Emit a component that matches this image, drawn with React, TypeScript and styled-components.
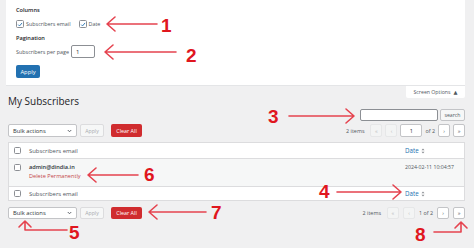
import React from "react";
import styled, { createGlobalStyle } from "styled-components";

const Global = createGlobalStyle`
  html, body { margin: 0; padding: 0; }
  body {
    background: #f0f0f1;
    font-family: "Open Sans", "Noto Sans", "DejaVu Sans", sans-serif;
    color: #2c3338;
  }
  * { box-sizing: border-box; }
`;

const Page = styled.div`
  position: relative;
  width: 474px;
  height: 248px;
  overflow: hidden;
  background: #f0f0f1;
`;

const OptionsPanel = styled.div`
  margin-left: 6px;
  width: 459px;
  height: 86px;
  background: #fff;
  border-bottom: 1px solid #e4e5e7;
  padding: 6px 10px 0 10px;
  display: flex;
  flex-direction: column;
`;

const Legend = styled.div<{ $gap?: number }>`
  margin-top: ${(p) => p.$gap ?? 0}px;
  font-size: 5.6px;
  font-weight: 600;
  color: #1d2327;
  line-height: 8px;
  height: 8px;
`;

const CheckRow = styled.div`
  display: flex;
  align-items: center;
  gap: 8px;
  margin-top: 6px;
  height: 8px;
`;

const CheckLabel = styled.label`
  display: flex;
  align-items: center;
  gap: 2px;
  font-size: 5.4px;
  color: #50575e;
`;

const Box = styled.span<{ $size: number }>`
  width: ${(p) => p.$size}px;
  height: ${(p) => p.$size}px;
  border: 0.7px solid #8c8f94;
  border-radius: 1.5px;
  background: #fff;
  display: inline-flex;
  align-items: center;
  justify-content: center;
  flex: none;
`;

const PerPageRow = styled.div`
  display: flex;
  align-items: center;
  gap: 2px;
  margin-top: 3px;
  font-size: 5.4px;
  color: #50575e;
`;

const NumInput = styled.div`
  width: 24px;
  height: 13px;
  border: 0.7px solid #8c8f94;
  border-radius: 2px;
  background: #fff;
  font-size: 6px;
  color: #2c3338;
  display: flex;
  align-items: center;
  padding-left: 4px;
`;

const PrimaryButton = styled.div`
  margin-top: 7px;
  width: 24px;
  height: 13px;
  background: #2271b1;
  border-radius: 2px;
  color: #fff;
  font-size: 5.8px;
  display: flex;
  align-items: center;
  justify-content: center;
`;

const Wrap = styled.div`
  padding: 0 9px 0 8px;
  display: flex;
  flex-direction: column;
`;

const TitleRow = styled.div`
  display: flex;
  justify-content: space-between;
  align-items: flex-start;
  height: 21px;
`;

const Title = styled.h1`
  margin: 9px 0 0 0;
  font-size: 10px;
  line-height: 12px;
  font-weight: 400;
  color: #1d2327;
`;

const ScreenTab = styled.div`
  width: 59px;
  height: 12px;
  background: #fff;
  border-radius: 0 0 2px 2px;
  font-size: 5.2px;
  color: #50575e;
  display: flex;
  align-items: center;
  justify-content: center;
  gap: 3px;
`;

const SearchRow = styled.div`
  display: flex;
  justify-content: flex-end;
  gap: 2px;
  margin-top: 2px;
  height: 12px;
`;

const SearchInput = styled.div`
  width: 78px;
  height: 12px;
  background: #fff;
  border: 0.7px solid #8c8f94;
  border-radius: 2px;
`;

const SecondaryButton = styled.div<{ $w: number; $muted?: boolean }>`
  width: ${(p) => p.$w}px;
  height: 100%;
  border: 0.7px solid ${(p) => (p.$muted ? "#dcdcde" : "#c3c4c7")};
  background: #f6f7f7;
  border-radius: 2px;
  font-size: 5.2px;
  color: ${(p) => (p.$muted ? "#a7aaad" : "#50575e")};
  display: flex;
  align-items: center;
  justify-content: center;
`;

const TableNav = styled.div<{ $top: number; $h: number }>`
  margin-top: ${(p) => p.$top}px;
  height: ${(p) => p.$h}px;
  display: flex;
  justify-content: space-between;
  align-items: stretch;
`;

const NavGroup = styled.div`
  display: flex;
  align-items: stretch;
  gap: 3px;
`;

const Select = styled.div`
  width: 69px;
  background: #fff;
  border: 0.7px solid #c3c4c7;
  border-radius: 2px;
  font-size: 5.8px;
  color: #2c3338;
  display: flex;
  align-items: center;
  justify-content: space-between;
  padding: 0 4px 0 4px;
`;

const DangerButton = styled.div`
  margin-left: 4px;
  width: 31px;
  background: #d02c2f;
  border-radius: 2px;
  color: #fff;
  font-size: 5.4px;
  display: flex;
  align-items: center;
  justify-content: center;
`;

const Pager = styled.div<{ $gap: number }>`
  display: flex;
  align-items: stretch;
  gap: ${(p) => p.$gap}px;
  font-size: 5.4px;
  color: #50575e;
`;

const PagerText = styled.span<{ $gap?: number }>`
  display: flex;
  align-items: center;
  margin-right: ${(p) => p.$gap ?? 0}px;
`;

const PageBtn = styled.div<{ $disabled?: boolean }>`
  width: 12px;
  border: 0.7px solid ${(p) => (p.$disabled ? "#e6e7e8" : "#c3c4c7")};
  background: ${(p) => (p.$disabled ? "#f3f4f4" : "#fff")};
  color: ${(p) => (p.$disabled ? "#b8babd" : "#50575e")};
  border-radius: 2px;
  font-size: 5.5px;
  display: flex;
  align-items: center;
  justify-content: center;
`;

const PageInput = styled.div`
  width: 22px;
  background: #fff;
  border: 0.7px solid #c3c4c7;
  border-radius: 2px;
  display: flex;
  align-items: center;
  justify-content: center;
  font-size: 5.6px;
  color: #2c3338;
`;

const Table = styled.div`
  margin-top: 5px;
  width: 457px;
  border: 0.7px solid #dcdcde;
  background: #fff;
  display: flex;
  flex-direction: column;
`;

const Row = styled.div<{ $h: number; $alt?: boolean; $line?: boolean }>`
  height: ${(p) => p.$h}px;
  display: grid;
  grid-template-columns: 20px 376px 60px;
  background: ${(p) => (p.$alt ? "#f6f7f7" : "#fff")};
  border-top: ${(p) => (p.$line ? "0.7px solid #dcdcde" : "none")};
`;

const CheckCell = styled.div<{ $top?: number }>`
  display: flex;
  justify-content: flex-start;
  padding-left: 5px;
  align-items: ${(p) => (p.$top !== undefined ? "flex-start" : "center")};
  padding-top: ${(p) => p.$top ?? 0}px;
`;

const TextCell = styled.div<{ $top?: number }>`
  display: flex;
  flex-direction: column;
  justify-content: ${(p) => (p.$top !== undefined ? "flex-start" : "center")};
  padding-top: ${(p) => p.$top ?? 0}px;
  font-size: 5.9px;
  color: #50575e;
`;

const DateCell = styled.div<{ $top?: number }>`
  display: flex;
  align-items: ${(p) => (p.$top !== undefined ? "flex-start" : "center")};
  gap: 2px;
  padding-top: ${(p) => p.$top ?? 0}px;
  font-size: 6.2px;
  color: #2271b1;
`;

const DateValue = styled.span`
  font-size: 5.2px;
  color: #50575e;
  line-height: 7px;
  white-space: nowrap;
`;

const Email = styled.span`
  font-weight: 600;
  color: #2c3338;
  font-size: 5.6px;
  line-height: 8px;
`;

const DeleteLink = styled.span`
  color: #c4474a;
  font-size: 5.6px;
  line-height: 8px;
  margin-top: 1px;
`;

const Overlay = styled.svg`
  position: absolute;
  left: 0;
  top: 0;
  width: 474px;
  height: 248px;
  pointer-events: none;
`;

const Num = styled.span<{ $x: number; $y: number }>`
  position: absolute;
  left: ${(p) => p.$x}px;
  top: ${(p) => p.$y}px;
  font-family: "Liberation Sans", Arial, sans-serif;
  font-weight: 700;
  font-size: 19px;
  line-height: 19px;
  color: #e0161e;
`;

const Check = ({ checked, size = 8 }: { checked?: boolean; size?: number }) => (
  <Box $size={size}>
    {checked && (
      <svg width={size - 1} height={size - 1} viewBox="0 0 10 10">
        <path d="M2 5.2 L4.2 7.4 L8.4 2.4" fill="none" stroke="#2271b1" strokeWidth="1.5" />
      </svg>
    )}
  </Box>
);

const Chevron = () => (
  <svg width="5" height="4" viewBox="0 0 10 8">
    <path d="M1.5 2 L5 5.5 L8.5 2" fill="none" stroke="#50575e" strokeWidth="1.8" />
  </svg>
);

const SortIcon = () => (
  <svg width="4" height="6" viewBox="0 0 8 12">
    <path d="M4 1 L7 4.5 H1 Z M4 11 L7 7.5 H1 Z" fill="#8c8f94" />
  </svg>
);

const Arrows = () => (
  <Overlay viewBox="0 0 474 248">
    <g fill="none" stroke="#e5434f" strokeWidth="1.6" strokeLinecap="round" strokeLinejoin="round">
      <path d="M107 24 H157 M115 17 L107 24 L115 31" />
      <path d="M105 52 H176 M113 45 L105 52 L113 59" />
      <path d="M289 116 H354 M346 109 L354 116 L346 123" />
      <path d="M337 192 H401 M393 185 L401 192 L393 199" />
      <path d="M88 175 H138 M96 168 L88 175 L96 182" />
      <path d="M149 212 H206 M157 205 L149 212 L157 219" />
      <path d="M25 221 V230 H67 M19 227 L25 221 L31 227" />
      <path d="M434 232 H461 V223 M455 228 L461 222 L467 228" />
    </g>
  </Overlay>
);

const BulkActions = () => (
  <NavGroup>
    <Select>
      Bulk actions
      <Chevron />
    </Select>
    <SecondaryButton $w={24} $muted>
      Apply
    </SecondaryButton>
    <DangerButton>Clear All</DangerButton>
  </NavGroup>
);

export default function App() {
  return (
    <Page>
      <Global />
      <OptionsPanel>
        <Legend>Columns</Legend>
        <CheckRow>
          <CheckLabel>
            <Check checked />
            Subscribers email
          </CheckLabel>
          <CheckLabel>
            <Check checked />
            Date
          </CheckLabel>
        </CheckRow>
        <Legend $gap={6}>Pagination</Legend>
        <PerPageRow>
          Subscribers per page
          <NumInput>1</NumInput>
        </PerPageRow>
        <PrimaryButton>Apply</PrimaryButton>
      </OptionsPanel>
      <Wrap>
        <TitleRow>
          <Title>My Subscribers</Title>
          <ScreenTab>
            Screen Options <span>▲</span>
          </ScreenTab>
        </TitleRow>
        <SearchRow>
          <SearchInput />
          <SecondaryButton $w={25}>search</SecondaryButton>
        </SearchRow>
        <TableNav $top={3} $h={13}>
          <BulkActions />
          <Pager $gap={3}>
            <PagerText $gap={3}>2 items</PagerText>
            <PageBtn $disabled>«</PageBtn>
            <PageBtn $disabled>‹</PageBtn>
            <PageInput>1</PageInput>
            <PagerText>of 2</PagerText>
            <PageBtn>›</PageBtn>
            <PageBtn>»</PageBtn>
          </Pager>
        </TableNav>
        <Table>
          <Row $h={15}>
            <CheckCell>
              <Check size={7} />
            </CheckCell>
            <TextCell>Subscribers email</TextCell>
            <DateCell>
              Date <SortIcon />
            </DateCell>
          </Row>
          <Row $h={28} $alt $line>
            <CheckCell $top={5}>
              <Check size={7} />
            </CheckCell>
            <TextCell $top={4}>
              <Email>admin@dindia.in</Email>
              <DeleteLink>Delete Permanently</DeleteLink>
            </TextCell>
            <DateCell $top={5}>
              <DateValue>2024-02-11 10:04:57</DateValue>
            </DateCell>
          </Row>
          <Row $h={14} $line>
            <CheckCell>
              <Check size={7} />
            </CheckCell>
            <TextCell>Subscribers email</TextCell>
            <DateCell>
              Date <SortIcon />
            </DateCell>
          </Row>
        </Table>
        <TableNav $top={6} $h={12}>
          <BulkActions />
          <Pager $gap={4}>
            <PagerText $gap={2}>2 items</PagerText>
            <PageBtn $disabled>«</PageBtn>
            <PageBtn $disabled>‹</PageBtn>
            <PagerText>1 of 2</PagerText>
            <PageBtn>›</PageBtn>
            <PageBtn>»</PageBtn>
          </Pager>
        </TableNav>
      </Wrap>
      <Arrows />
      <Num $x={161} $y={16}>1</Num>
      <Num $x={186} $y={46}>2</Num>
      <Num $x={268} $y={107}>3</Num>
      <Num $x={319} $y={182}>4</Num>
      <Num $x={69} $y={223}>5</Num>
      <Num $x={144} $y={165}>6</Num>
      <Num $x={211} $y={203}>7</Num>
      <Num $x={415} $y={225}>8</Num>
    </Page>
  );
}
